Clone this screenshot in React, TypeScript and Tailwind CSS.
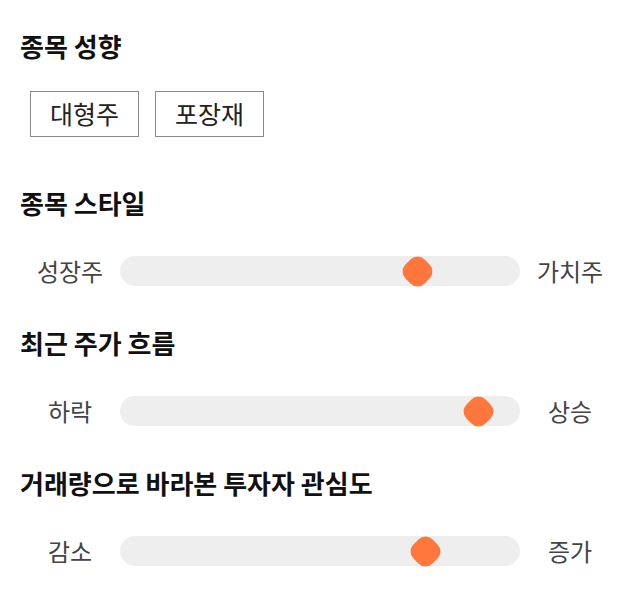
const FONT = "font-['Noto_Sans_CJK_KR','Noto_Sans',sans-serif]"

const SLIDERS = [
  { title: '종목 스타일', left: '성장주', right: '가치주', value: 0.743 },
  { title: '최근 주가 흐름', left: '하락', right: '상승', value: 0.895 },
  { title: '거래량으로 바라본 투자자 관심도', left: '감소', right: '증가', value: 0.763 },
]

function Slider({ left, right, value }: { left: string; right: string; value: number }) {
  return (
    <div className="flex items-center">
      <div className="w-[100px] text-center text-[24px] leading-[30px] text-[#444]">{left}</div>
      <div className="relative flex-1 h-[30px] rounded-full bg-[#eeeeee]">
        {/* thumb: rounded square turned 45deg */}
        <div
          className="absolute top-[1.5px] w-[27px] h-[27px] -ml-[13.5px] rotate-45 rounded-[10px] bg-[#ff773d]"
          style={{ left: `${value * 100}%` }}
        />
      </div>
      <div className="w-[100px] text-center text-[24px] leading-[30px] text-[#444]">{right}</div>
    </div>
  )
}

export default function App() {
  return (
    <div className={`${FONT} w-[640px] h-[606px] bg-white px-5 pt-[30px]`}>
      <h2 className="text-[26px] leading-8 font-bold text-[#111]">종목 성향</h2>
      <div className="flex gap-4 mt-[29px] ml-[10px]">
        {['대형주', '포장재'].map(t => (
          <div
            key={t}
            className="w-[109px] h-[46px] flex items-center justify-center border border-[#8a8a8a] text-[25px] text-[#222]"
          >
            {t}
          </div>
        ))}
      </div>

      {SLIDERS.map((s, i) => (
        <div key={s.title} className={i === 0 ? 'mt-[50px]' : 'mt-[41px]'}>
          <h2 className="text-[26px] leading-8 font-bold text-[#111]">{s.title}</h2>
          <div className="mt-[37px]">
            <Slider left={s.left} right={s.right} value={s.value} />
          </div>
        </div>
      ))}
    </div>
  )
}
